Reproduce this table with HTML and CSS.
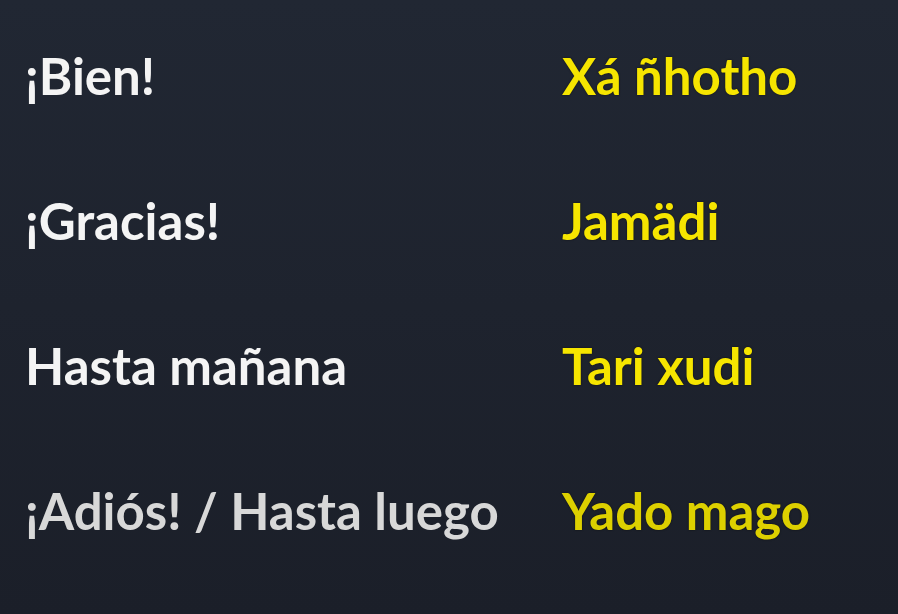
FILE: index.html
```html
<!DOCTYPE html>
<html lang="es">
<head>
    <meta charset="UTF-8">
    <meta name="viewport" content="width=device-width, initial-scale=1.0">
    <title>Saludos</title>
    <link rel="stylesheet" href="styles.css">
</head>
<body>
    <main class="phrases">
        <div class="row">
            <span class="es">¡Bien!</span>
            <span class="oto">Xá ñhotho</span>
        </div>
        <div class="row">
            <span class="es">¡Gracias!</span>
            <span class="oto">Jamädi</span>
        </div>
        <div class="row">
            <span class="es">Hasta mañana</span>
            <span class="oto">Tari xudi</span>
        </div>
        <div class="row dim">
            <span class="es">¡Adiós! / Hasta luego</span>
            <span class="oto">Yado mago</span>
        </div>
    </main>
</body>
</html>
```
FILE: styles.css
```css
html, body {
    height: 100%;
}
body {
    margin: 0;
    background: linear-gradient(#212733, #1b1f29);
    font-family: Lato, "Open Sans", sans-serif;
    font-weight: 700;
    font-size: 51px;
}
.phrases {
    padding: 3px 0 0 25px;
}
.row {
    display: grid;
    grid-template-columns: 537px auto;
    line-height: 145px;
    white-space: nowrap;
}
.es {
    color: #f4f4f4;
}
.oto {
    color: #f6e500;
    text-shadow: 0 0 2px rgba(0,0,0,0.6);
}
.dim .es { color: #d8d8d8; }
.dim .oto { color: #ddd000; }
```
